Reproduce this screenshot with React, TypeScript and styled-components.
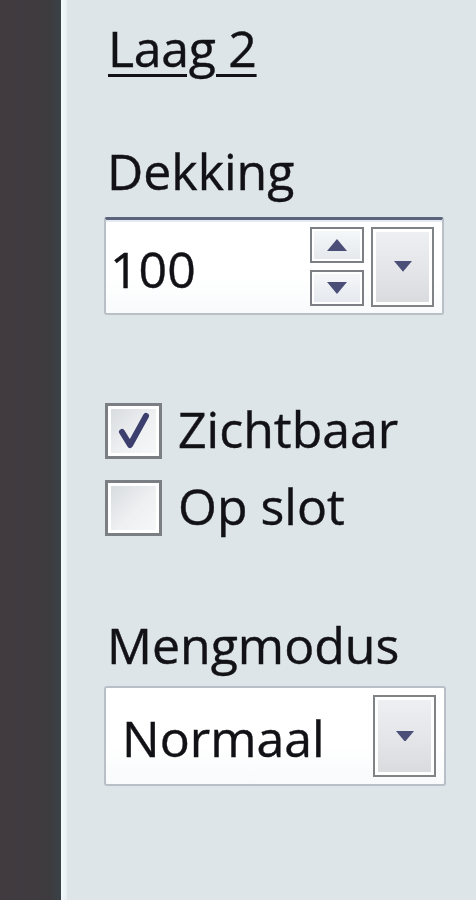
import React from 'react';
import styled, { createGlobalStyle } from 'styled-components';

const GlobalStyle = createGlobalStyle`
  html, body {
    margin: 0;
    padding: 0;
    height: 100%;
    background: #dde5e8;
  }
  #root {
    height: 100%;
  }
`;

const Page = styled.div`
  display: flex;
  height: 900px;
  font-family: "Open Sans", "Noto Sans", sans-serif;
  color: #121216;
`;

const DarkStrip = styled.div`
  width: 62px;
  background: linear-gradient(90deg, #413b40 0%, #3e3b3f 80%, #394248 100%);
`;

const Edge = styled.div`
  width: 6px;
  background: linear-gradient(90deg, #f4fbfd, #e6eef1);
`;

const Panel = styled.div`
  flex: 1;
  display: flex;
  flex-direction: column;
  align-items: flex-start;
  padding: 18px 30px 0 40px;
  background: #dde5e8;
`;

const Label = styled.div<{ $gap?: number }>`
  font-size: 50px;
  line-height: 60px;
  margin-top: ${(p) => p.$gap ?? 0}px;
  white-space: nowrap;
  -webkit-text-stroke: 0.4px #121216;
`;

const Title = styled(Label)`
  text-decoration: underline;
  text-decoration-thickness: 3px;
  text-underline-offset: 7px;
  margin-left: 1px;
  letter-spacing: -0.3px;
`;

const Field = styled.div<{ $gap?: number; $h?: number }>`
  box-sizing: border-box;
  width: 342px;
  height: ${(p) => p.$h ?? 98}px;
  margin-top: ${(p) => p.$gap ?? 0}px;
  margin-left: -3px;
  display: flex;
  align-items: center;
  padding: 0 8px 0 4px;
  background: linear-gradient(180deg, #ffffff 0%, #ffffff 60%, #f8fafb 100%);
  border: 2px solid #b9bfc6;
  border-radius: 3px;
`;

const SpinField = styled(Field)`
  width: 340px;
  border-top: 3px solid #59637c;
  box-shadow: inset 0 2px 0 #e6ebf2;
`;

const Value = styled.span`
  flex: 1;
  font-size: 50px;
  line-height: 60px;
  padding-top: 4px;
  -webkit-text-stroke: 0.4px #121216;
`;

const SelectValue = styled(Value)`
  padding-left: 12px;
`;

const SpinButtons = styled.div`
  display: flex;
  flex-direction: column;
  gap: 7px;
  margin-right: 7px;
`;

const SmallBtn = styled.div`
  box-sizing: border-box;
  width: 54px;
  height: 36px;
  display: flex;
  align-items: center;
  justify-content: center;
  border: 2px solid #7c8084;
  box-shadow: inset 0 0 0 2px #ffffff;
  background: linear-gradient(180deg, #f6f8fa, #e4e8ec);
`;

const DropBtn = styled.div<{ $h: number }>`
  box-sizing: border-box;
  width: 63px;
  height: ${(p) => p.$h}px;
  display: flex;
  align-items: center;
  justify-content: center;
  border: 2px solid #808386;
  box-shadow: inset 0 0 0 3px #ffffff;
  background: linear-gradient(180deg, #eef0f3 0%, #e2e4e7 60%, #d8dadd 100%);
`;

const Checks = styled.div`
  margin-top: 88px;
  display: flex;
  flex-direction: column;
  gap: 21px;
`;

const CheckRow = styled.label`
  display: flex;
  align-items: center;
  gap: 16px;
`;

const Box = styled.span`
  box-sizing: border-box;
  width: 57px;
  height: 56px;
  margin-left: -2px;
  display: flex;
  align-items: center;
  justify-content: center;
  border: 3px solid #7b7f84;
  box-shadow: inset 0 0 0 3px #ffffff;
  background: linear-gradient(135deg, #d6d9dd 0%, #eef0f2 55%, #f7f8f9 100%);
`;

const CheckText = styled.span`
  font-size: 50px;
  line-height: 60px;
  margin-top: -4px;
  -webkit-text-stroke: 0.4px #121216;
`;

const Arrow = ({ up, size = 20 }: { up?: boolean; size?: number }) => (
  <svg width={size} height={size * 0.6} viewBox="0 0 10 6">
    <path d={up ? 'M0 6 L5 0 L10 6 Z' : 'M0 0 L10 0 L5 6 Z'} fill="#4b4f78" />
  </svg>
);

const Tick = () => (
  <svg width="34" height="38" viewBox="0 0 34 38">
    <path
      d="M5 20 L13 33 L29 4"
      fill="none"
      stroke="#3c3f6e"
      strokeWidth="6"
      strokeLinecap="round"
      strokeLinejoin="round"
    />
  </svg>
);

export default function App() {
  return (
    <>
      <GlobalStyle />
      <Page>
        <DarkStrip />
        <Edge />
        <Panel>
          <Title>Laag 2</Title>
          <Label $gap={63}>Dekking</Label>
          <SpinField $gap={16}>
            <Value>100</Value>
            <SpinButtons>
              <SmallBtn>
                <Arrow up />
              </SmallBtn>
              <SmallBtn>
                <Arrow />
              </SmallBtn>
            </SpinButtons>
            <DropBtn $h={80}>
              <Arrow size={18} />
            </DropBtn>
          </SpinField>
          <Checks>
            <CheckRow>
              <Box>
                <Tick />
              </Box>
              <CheckText>Zichtbaar</CheckText>
            </CheckRow>
            <CheckRow>
              <Box />
              <CheckText>Op slot</CheckText>
            </CheckRow>
          </Checks>
          <Label $gap={79}>Mengmodus</Label>
          <Field $gap={11} $h={100}>
            <SelectValue>Normaal</SelectValue>
            <DropBtn $h={82}>
              <Arrow size={18} />
            </DropBtn>
          </Field>
        </Panel>
      </Page>
    </>
  );
}
